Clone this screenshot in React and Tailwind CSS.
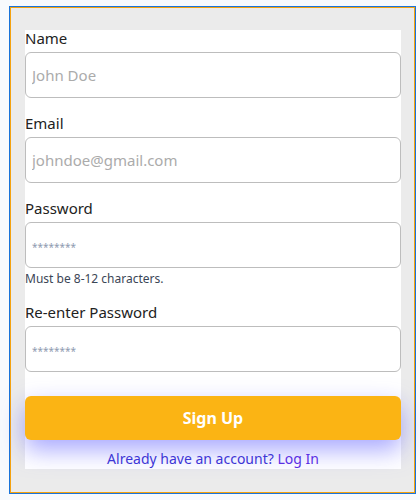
import React from "react";

function Field({ label, placeholder, type = "text", helper, stars }) {
  return (
    <div className="flex flex-col">
      <label className="h-[20px] text-[15px] leading-[16px] text-[#222222] mb-[2px]">{label}</label>
      <input
        type={type}
        placeholder={placeholder}
        className={
          stars
            ? "h-[46px] w-full rounded-[6px] border border-[#bdbdbd] bg-white px-[6px] text-[15px] text-[#333] placeholder:text-[10px] placeholder:text-[#8e9bb0] outline-none"
            : "h-[46px] w-full rounded-[6px] border border-[#bdbdbd] bg-white px-[6px] text-[15px] text-[#333] placeholder:text-[#ababab] outline-none"
        }
      />
      {helper && (
        <p className="mt-[3px] text-[12px] leading-[16px] text-[#3b4656]">{helper}</p>
      )}
    </div>
  );
}

export default function App() {
  return (
    <div
      className="min-h-screen bg-[#f8fafd] pt-[6px] pl-[9px]"
      style={{ fontFamily: '"Noto Sans", "DejaVu Sans", sans-serif' }}
    >
      <div className="w-[407px] h-[488px] border border-[#1a73d9]">
        <div className="h-full border border-[#f5a20f] bg-[#ebebeb] pt-[22px] pl-[14px]">
          <div className="w-[376px] h-[439px] bg-white flex flex-col">
            <Field label="Name" placeholder="John Doe" />
            <div className="mt-[17px]">
              <Field label="Email" placeholder="johndoe@gmail.com" />
            </div>
            <div className="mt-[17px]">
              <Field label="Password" placeholder="********" stars helper="Must be 8-12 characters." />
            </div>
            <div className="mt-[17px]">
              <Field label="Re-enter Password" placeholder="********" stars />
            </div>
            <button className="mt-[24px] h-[44px] w-full rounded-[6px] bg-[#fbb414] text-white text-[16px] font-bold shadow-[0_10px_24px_rgba(96,96,255,0.55)]">
              Sign Up
            </button>
            <p className="mt-[10px] text-center text-[14px] leading-[18px] text-[#3d36d6]">
              Already have an account? <span className="text-[#5a2fe4]">Log In</span>
            </p>
          </div>
        </div>
      </div>
    </div>
  );
}
